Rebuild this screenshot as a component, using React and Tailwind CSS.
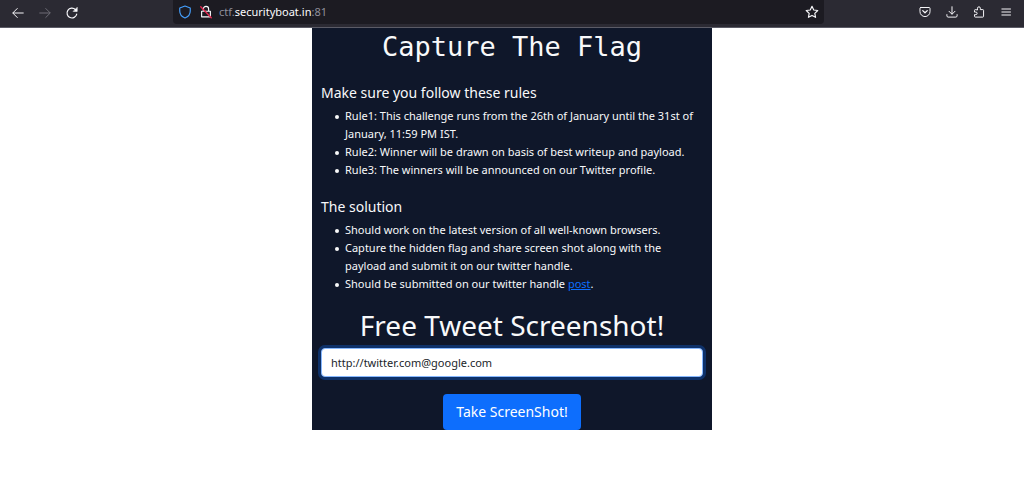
import { useState } from 'react';

const rules = [
  'Rule1: This challenge runs from the 26th of January until the 31st of January, 11:59 PM IST.',
  'Rule2: Winner will be drawn on basis of best writeup and payload.',
  'Rule3: The winners will be announced on our Twitter profile.',
];

const solution = [
  'Should work on the latest version of all well-known browsers.',
  'Capture the hidden flag and share screen shot along with the payload and submit it on our twitter handle.',
];

function Icon({ children, className = 'size-3.5 text-[#fbfbfe]' }) {
  return (
    <svg
      viewBox="0 0 16 16"
      className={className}
      fill="none"
      stroke="currentColor"
      strokeWidth="1.3"
      strokeLinecap="round"
      strokeLinejoin="round"
      aria-hidden="true"
    >
      {children}
    </svg>
  );
}

function BarButton({ label, children, disabled }) {
  return (
    <button type="button" aria-label={label} disabled={disabled} className="flex size-5 items-center justify-center">
      {children}
    </button>
  );
}

function Toolbar() {
  return (
    <header className="flex h-7 items-start border-b border-[#5b5b66] bg-[#2b2a33]">
      <nav className="flex w-[173px] shrink-0 items-center gap-[7px] pt-[3px] pl-2">
        <BarButton label="Back">
          <Icon className="size-3 text-[#fbfbfe]"><path d="M15 8H1.500M7 2 1 8l6 6" /></Icon>
        </BarButton>
        <BarButton label="Forward" disabled>
          <Icon className="size-3 text-[#6f6e77]"><path d="M1 8h13.500M9 2l6 6-6 6" /></Icon>
        </BarButton>
        <BarButton label="Reload">
          <Icon>
            <path d="M13.4 9.2A5.6 5.6 0 1 1 11.8 4l1.2 1.2" />
            <path d="M14 1.8v4.4H9.6z" fill="currentColor" strokeWidth="0.6" />
          </Icon>
        </BarButton>
      </nav>

      <div className="flex h-6 min-w-0 flex-1 items-center rounded-b-sm bg-[#1c1b22] pr-0.5 pl-[5px]">
        <Icon className="size-3.5 text-[#45a1ff]">
          <path d="M8 1.200 2 3.400v3.400c0 3.400 2.400 6.600 6 8 3.600-1.400 6-4.600 6-8V3.400z" />
        </Icon>
        <Icon className="ml-[7px] size-3.5 text-[#fbfbfe]">
          <path d="M5 7V4.600a3 3 0 0 1 6 0V7M3 7.200h10v6.300H3z" />
          <path d="m2 2 12 12.500" stroke="#e22850" strokeWidth="1.600" />
        </Icon>
        <span className="ml-1.5 flex-1 text-[11px] text-[#8f8f9b]">
          ctf.<span className="text-[#fbfbfe]">securityboat.in</span>:81
        </span>
        <BarButton label="Bookmark this page">
          <Icon>
            <path d="m8 1.500 2 4.200 4.600.600-3.400 3.200.900 4.600L8 11.900l-4.100 2.200.900-4.600L1.400 6.300 6 5.700z" />
          </Icon>
        </BarButton>
      </div>

      <nav className="flex w-[200px] shrink-0 items-center justify-end gap-[7px] pt-[2px] pr-2">
        <BarButton label="Save to Pocket">
          <Icon className="size-3 text-[#fbfbfe]">
            <path d="M2.500 2h11c.700 0 1.200.500 1.200 1.200v4.200a6.700 6.700 0 0 1-13.400 0V3.200C1.300 2.500 1.800 2 2.500 2z" />
            <path d="M5 6.200 8 9l3-2.800" strokeWidth="1.700" />
          </Icon>
        </BarButton>
        <BarButton label="Downloads">
          <Icon className="size-3 text-[#fbfbfe]">
            <path d="M8 1v9.500M4 7l4 4 4-4M1.200 11.500v1.700c0 .900.700 1.600 1.600 1.600h10.400c.900 0 1.600-.700 1.600-1.600v-1.700" />
          </Icon>
        </BarButton>
        <BarButton label="Extensions">
          <Icon className="size-3 text-[#fbfbfe]">
            <path d="M6 4.800V3a1.900 1.900 0 0 1 3.800 0v1.800h3.300c.600 0 1 .400 1 1v8c0 .600-.400 1-1 1H3c-.600 0-1-.400-1-1v-2.300h1.800a1.500 1.500 0 0 0 0-3.400H2V5.800c0-.600.400-1 1-1z" />
          </Icon>
        </BarButton>
        <BarButton label="Open application menu">
          <Icon className="size-3 text-[#fbfbfe]"><path d="M2.500 4h11.500M2.500 8h11.500M2.500 12h11.500" /></Icon>
        </BarButton>
      </nav>
    </header>
  );
}

function Rule({ children }) {
  return (
    <li className="flex gap-1.5 before:mt-2 before:size-1 before:shrink-0 before:rounded-full before:bg-current">
      <p>{children}</p>
    </li>
  );
}

function RuleList({ title, children }) {
  return (
    <section className="mb-[18px]">
      <h2 className="text-sm leading-5">{title}</h2>
      <ul className="mt-1 pl-3.5 text-[11px] leading-[18px]">{children}</ul>
    </section>
  );
}

export default function App() {
  const [url, setUrl] = useState('http://twitter.com@google.com');

  return (
    <div className="min-h-screen bg-white font-['Noto_Sans',sans-serif]">
      <Toolbar />
      <main className="mx-auto max-w-[400px] bg-[#0f172a] px-[9px] text-[#f8f9fa]">
        <h1 className="mb-[17px] text-center font-['DejaVu_Sans_Mono',monospace] text-[27px] leading-[38px]">
          Capture The Flag
        </h1>

        <RuleList title="Make sure you follow these rules">
          {rules.map(function (r) {
            return <Rule key={r}>{r}</Rule>;
          })}
        </RuleList>

        <RuleList title="The solution">
          {solution.map(function (s) {
            return <Rule key={s}>{s}</Rule>;
          })}
          <Rule>
            Should be submitted on our twitter handle <a href="#post" className="text-[#0d6efd] underline">post</a>.
          </Rule>
        </RuleList>

        <form onSubmit={function (e) { e.preventDefault(); }} className="text-center">
          <label htmlFor="tweet" className="block text-[28px] leading-7">Free Tweet Screenshot!</label>
          <input
            id="tweet"
            type="text"
            value={url}
            onChange={function (e) { setUrl(e.target.value); }}
            className="mt-[9px] block h-[29px] w-full rounded-sm border border-[#86b7fe] bg-white px-[9px] text-[11px] text-[#212529] ring-3 ring-[#0d6efd]/30 outline-none"
          />
          <button type="submit" className="mt-[17px] h-9 rounded-sm bg-[#0d6efd] px-[13px] text-sm text-white">
            Take ScreenShot!
          </button>
        </form>
      </main>
    </div>
  );
}
